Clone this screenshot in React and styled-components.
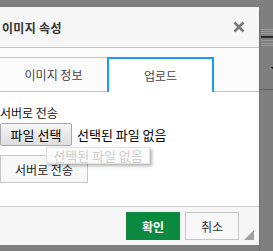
import React from "react";
import styled, { createGlobalStyle } from "styled-components";

const GlobalStyle = createGlobalStyle`
  html, body {
    margin: 0;
    padding: 0;
    background: #7f7f7f;
    font-family: "Noto Sans CJK KR", "Noto Sans", sans-serif;
  }
`;

const Page = styled.div`
  display: flex;
  height: 251px;
  overflow: hidden;
  padding-top: 7px;
  box-sizing: border-box;
  border-top: 3px solid #858585;
  border-top: none;
`;

const Dialog = styled.div`
  width: 259px;
  height: 238px;
  background: #fff;
  display: flex;
  flex-direction: column;
  flex-shrink: 0;
`;

const Header = styled.div`
  height: 40px;
  flex-shrink: 0;
  background: #f6f6f6;
  border-bottom: 1px solid #c6c6c6;
  display: flex;
  align-items: center;
  justify-content: space-between;
  padding: 0 14px 0 2px;
  box-sizing: content-box;
`;

const Title = styled.span`
  font-size: 12px;
  font-weight: bold;
  color: #333;
  letter-spacing: 0.3px;
`;

const Close = styled.button`
  border: none;
  background: none;
  padding: 0;
  width: 12px;
  height: 12px;
  display: flex;
  cursor: pointer;
`;

const TabBar = styled.div`
  display: flex;
  align-items: flex-end;
  background: #fbfbfb;
  padding-top: 9px;
  border-bottom: 1px solid #c6c6c6;
`;

const Tab = styled.div`
  height: 34px;
  box-sizing: border-box;
  display: flex;
  align-items: center;
  justify-content: center;
  font-size: 12px;
  color: #444;
  width: ${(p) => p.$width}px;
  background: ${(p) => (p.$active ? "#fff" : "#fbfbfb")};
  border-top: ${(p) => (p.$active ? "2px solid #1a9cf0" : "1px solid #c6c6c6")};
  border-left: ${(p) => (p.$active ? "2px solid #1a9cf0" : "none")};
  border-right: ${(p) => (p.$active ? "2px solid #1a9cf0" : "none")};
  margin-bottom: ${(p) => (p.$active ? "-1px" : "0")};
  height: ${(p) => (p.$active ? "35px" : "34px")};
  padding-bottom: ${(p) => (p.$active ? "1px" : "0")};
`;

const Body = styled.div`
  flex: 1;
  padding: 13px 0 0 0;
  display: flex;
  flex-direction: column;
  align-items: flex-start;
`;

const Label = styled.div`
  font-size: 12px;
  line-height: 16px;
  color: #111;
  margin-bottom: 2px;
`;

const FileRow = styled.div`
  position: relative;
  display: flex;
  align-items: center;
  gap: 5px;
  font-size: 13px;
  color: #000;
`;

const FileButton = styled.button`
  font-family: inherit;
  font-size: 13px;
  height: 23px;
  width: 72px;
  padding: 0;
  border: 1px solid #a8a8a8;
  border-radius: 2px;
  background: linear-gradient(#f6f6f6, #dedede);
  color: #000;
`;

const Tooltip = styled.div`
  position: absolute;
  left: 46px;
  top: 24px;
  width: 104px;
  height: 17px;
  box-sizing: border-box;
  display: flex;
  align-items: center;
  justify-content: center;
  font-size: 13px;
  color: #cfcfcf;
  background: rgba(250, 250, 250, 0.85);
  border: 1px solid #e2e2e2;
  box-shadow: 2px 2px 3px rgba(0, 0, 0, 0.3);
  z-index: 1;
`;

const SendButton = styled.button`
  margin-top: 9px;
  width: 88px;
  height: 28px;
  font-family: inherit;
  font-size: 12px;
  color: #222;
  background: #f8f8f8;
  border: 1px solid #c6c6c6;
  padding: 0;
`;

const Footer = styled.div`
  position: relative;
  height: 39px;
  flex-shrink: 0;
  background: #f6f6f6;
  border-top: 1px solid #d0d0d0;
  display: flex;
  justify-content: flex-end;
  gap: 5px;
  padding: 5px 20px 0 0;
  box-sizing: border-box;
`;

const FooterButton = styled.button`
  width: 54px;
  height: 28px;
  font-family: inherit;
  font-size: 12px;
  padding: 0;
  font-weight: ${(p) => (p.$primary ? "bold" : "normal")};
  color: ${(p) => (p.$primary ? "#fff" : "#333")};
  background: ${(p) => (p.$primary ? "#0b8a3f" : "#f8f8f8")};
  border: 1px solid ${(p) => (p.$primary ? "#0b8a3f" : "#c6c6c6")};
`;

const Grip = styled.div`
  position: absolute;
  right: 5px;
  bottom: 5px;
  width: 0;
  height: 0;
  border-left: 10px solid transparent;
  border-bottom: 10px solid #a0a0a0;
`;

const Side = styled.div`
  flex: 1;
  border-left: 1px solid #707070;
  margin-top: 4px;
`;

const SideLines = () => (
  <svg width="14" height="90" viewBox="0 0 14 90">
    <line x1="1" y1="18.5" x2="14" y2="18.5" stroke="#9a9a9a" />
    <line x1="1" y1="20.5" x2="14" y2="20.5" stroke="#9a9a9a" />
    <line x1="1" y1="22.5" x2="14" y2="22.5" stroke="#9a9a9a" />
    <line x1="1" y1="26" x2="14" y2="26" stroke="#2a2a2a" strokeWidth="2" />
    <line x1="1" y1="29.5" x2="14" y2="29.5" stroke="#9a9a9a" />
    <line x1="1" y1="32.5" x2="14" y2="32.5" stroke="#9a9a9a" />
    <line x1="1" y1="34.5" x2="14" y2="34.5" stroke="#9a9a9a" />
    <path d="M11 56 L14 56 L12.5 58 Z" fill="#111" />
    <line x1="0" y1="78.5" x2="14" y2="78.5" stroke="#5e5e5e" />
  </svg>
);

export default function App() {
  return (
    <>
      <GlobalStyle />
      <Page>
        <Dialog>
          <Header>
            <Title>이미지 속성</Title>
            <Close aria-label="닫기">
              <svg width="12" height="12" viewBox="0 0 12 12">
                <path d="M1.5 1.5 L10.5 10.5 M10.5 1.5 L1.5 10.5" stroke="#777" strokeWidth="2.6" />
              </svg>
            </Close>
          </Header>
          <TabBar>
            <Tab $width={107}>이미지 정보</Tab>
            <Tab $width={107} $active>업로드</Tab>
          </TabBar>
          <Body>
            <Label>서버로 전송</Label>
            <FileRow>
              <FileButton>파일 선택</FileButton>
              <span>선택된 파일 없음</span>
              <Tooltip>선택된 파일 없음</Tooltip>
            </FileRow>
            <SendButton>서버로 전송</SendButton>
          </Body>
          <Footer>
            <FooterButton $primary>확인</FooterButton>
            <FooterButton>취소</FooterButton>
            <Grip />
          </Footer>
        </Dialog>
        <Side>
          <SideLines />
        </Side>
      </Page>
    </>
  );
}
